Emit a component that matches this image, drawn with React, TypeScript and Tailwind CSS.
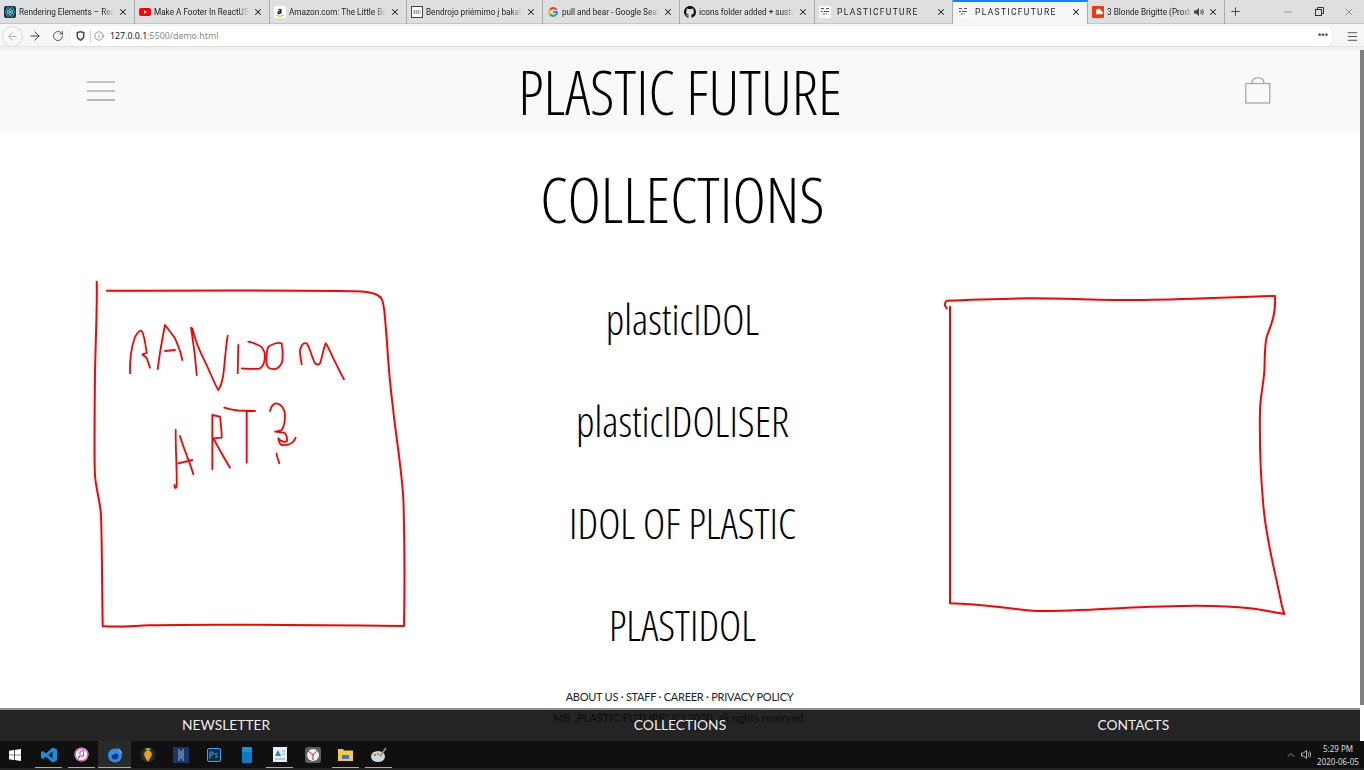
import React from "react";
import { ArrowLeft, ArrowRight, RotateCw, Info, X, Plus, Minus, ChevronUp, Menu } from "lucide-react";

const cond = "font-['Open_Sans',sans-serif] font-light [font-stretch:75%] text-black";

function Fav({ k }: { k: string }) {
  if (k === "react")
    return (
      <svg width="12" height="12" viewBox="0 0 12 12">
        <rect width="12" height="12" rx="2" fill="#20323a" />
        <circle cx="6" cy="6" r="1.2" fill="#61dafb" />
        <ellipse cx="6" cy="6" rx="5" ry="2" fill="none" stroke="#61dafb" strokeWidth=".6" />
        <ellipse cx="6" cy="6" rx="5" ry="2" fill="none" stroke="#61dafb" strokeWidth=".6" transform="rotate(60 6 6)" />
        <ellipse cx="6" cy="6" rx="5" ry="2" fill="none" stroke="#61dafb" strokeWidth=".6" transform="rotate(120 6 6)" />
      </svg>
    );
  if (k === "yt")
    return (
      <svg width="12" height="12" viewBox="0 0 12 12">
        <rect y="2" width="12" height="8" rx="2" fill="#f00" />
        <path d="M5 4.2 8 6 5 7.8z" fill="#fff" />
      </svg>
    );
  if (k === "amz")
    return (
      <svg width="12" height="12" viewBox="0 0 12 12">
        <rect width="12" height="12" rx="2" fill="#fff" />
        <path d="M3.8 6.8c0-2 3.2-1.6 3.2-2.8 0-1-1.7-1-2.6-.2M7 4v3.6M7 5.6C5 5.6 3.8 6 3.8 6.9c0 1 2.2 1 3.2-.2" fill="none" stroke="#222" strokeWidth="1.1" />
        <path d="M2 9c2.500 1.600 5.500 1.600 8 0" fill="none" stroke="#f90" strokeWidth="1" />
      </svg>
    );
  if (k === "bsu")
    return (
      <svg width="12" height="12" viewBox="0 0 12 12">
        <rect x=".5" y=".5" width="11" height="11" fill="#fff" stroke="#444" />
        <path d="M2.500 5h7M2.500 7h7" stroke="#444" strokeWidth="1.200" strokeDasharray="1.500 .6" />
      </svg>
    );
  if (k === "g")
    return (
      <svg width="12" height="12" viewBox="0 0 12 12">
        <path d="M10.500 3.500A5 5 0 0 0 2 3.200l1.800 1.300A3 3 0 0 1 8.300 4z" fill="#ea4335" />
        <path d="M2 3.200a5 5 0 0 0 0 5.600l1.800-1.300a3 3 0 0 1 0-3z" fill="#fbbc05" />
        <path d="M2 8.800a5 5 0 0 0 7.300 1L7.600 8.400A3 3 0 0 1 3.800 7.500z" fill="#34a853" />
        <path d="M9.300 9.800A5 5 0 0 0 11 5H6v2h2.900a2.500 2.500 0 0 1-1.300 1.400z" fill="#4285f4" />
      </svg>
    );
  if (k === "gh")
    return (
      <svg width="12" height="12" viewBox="0 0 16 16" fill="#111">
        <path d="M8 0C3.580 0 0 3.580 0 8c0 3.540 2.290 6.530 5.470 7.590.4.070.55-.17.55-.38 0-.19-.01-.82-.01-1.490-2.010.37-2.530-.49-2.690-.94-.09-.23-.48-.94-.82-1.130-.28-.15-.68-.52-.01-.53.63-.01 1.080.58 1.230.82.720 1.210 1.870.870 2.330.660.070-.520.280-.870.510-1.070-1.780-.200-3.640-.890-3.640-3.950 0-.870.310-1.590.820-2.150-.080-.200-.360-1.020.080-2.120 0 0 .670-.210 2.200.820a7.400 7.400 0 0 1 4 0c1.530-1.040 2.200-.820 2.200-.820.440 1.100.160 1.920.080 2.120.510.560.820 1.270.820 2.150 0 3.070-1.870 3.750-3.650 3.950.290.250.540.730.540 1.480 0 1.070-.010 1.930-.010 2.200 0 .210.150.460.550.380A8.010 8.010 0 0 0 16 8c0-4.420-3.580-8-8-8z" />
      </svg>
    );
  if (k === "pf")
    return (
      <svg width="12" height="12" viewBox="0 0 12 12">
        <rect width="12" height="12" fill="#fafafa" />
        <path d="M2 2.500h3M7 2.500h3M2 5.500h2M5 5.500h5M4 8h2M7 8h1" stroke="#555" strokeWidth="1" />
      </svg>
    );
  return (
    <svg width="12" height="12" viewBox="0 0 12 12">
      <rect width="12" height="12" rx="1" fill="#f5350f" />
      <path d="M2 8.200h7.500a1.500 1.500 0 0 0 0-3 3 3 0 0 0-5.500-1V8.200z" fill="#fff" />
    </svg>
  );
}

const tabs = [
  { k: "react", t: "Rendering Elements – React" },
  { k: "yt", t: "Make A Footer In ReactUS | 2" },
  { k: "amz", t: "Amazon.com: The Little Book" },
  { k: "bsu", t: "Bendrojo priėmimo į bakalaur" },
  { k: "g", t: "pull and bear - Google Search" },
  { k: "gh", t: "icons folder added + sustain" },
  { k: "pf", t: "PLASTICFUTURE", s: true },
  { k: "pf", t: "PLASTICFUTURE", s: true, a: true },
  { k: "sc", t: "3 Blonde Brigitte (Produ", m: true },
];

function TabBar() {
  return (
    <div className="h-[24px] bg-[#dedfe1] flex items-stretch shrink-0 border-b border-[#c4c5c8]">
      <div className="grid grid-cols-[135px_135px_137px_136px_137px_135px_138px_135px_137px]">
        {tabs.map((x, i) => (
          <div
            key={i}
            className={
              "flex items-center pl-[3px] pr-[6px] gap-[2px] border-r border-[#a9aaad] " +
              (x.a ? "bg-[#f5f6f7] border-t-2 border-t-[#0a84ff] h-[24px] pb-[2px]" : "")
            }
          >
            <span className="w-[14px] h-[14px] flex items-center justify-center shrink-0">
              <Fav k={x.k} />
            </span>
            <span
              className={
                "flex-1 min-w-0 overflow-hidden whitespace-nowrap font-['Roboto',sans-serif] text-[#1d1d20] [mask-image:linear-gradient(to_right,black_88%,transparent)] " +
                (x.s ? "text-[8.5px] tracking-[1.33px] pl-[3px]" : "text-[8.2px] leading-[14px]")
              }
            >
              {x.t}
            </span>
            {x.m && (
              <svg width="10" height="10" viewBox="0 0 10 10" className="shrink-0">
                <path d="M0 3.500h2L5 1v8L2 6.500H0z" fill="#444" />
                <path d="M6.500 3c1 1 1 3 0 4M8 2c1.500 1.500 1.500 4.500 0 6" fill="none" stroke="#444" />
              </svg>
            )}
            <X size={10} strokeWidth={2.5} className="shrink-0 text-[#222] ml-[2px]" />
          </div>
        ))}
      </div>
      <div className="flex items-center pl-[4px]">
        <Plus size={13} strokeWidth={1.5} className="text-[#222]" />
      </div>
      <div className="flex-1 flex items-center justify-end text-[#444]">
        <div className="w-[31px] flex justify-center">
          <Minus size={12} strokeWidth={1} />
        </div>
        <div className="w-[31px] flex justify-center">
          <svg width="10" height="10" viewBox="0 0 10 10" fill="none" stroke="#333">
            <rect x="1.500" y="2.500" width="6" height="6" />
            <path d="M3.500 2.500v-2h6v6h-2" />
          </svg>
        </div>
        <div className="w-[30px] flex justify-center">
          <X size={12} strokeWidth={1} />
        </div>
      </div>
    </div>
  );
}

function Toolbar() {
  return (
    <div className="h-[23px] bg-[#f5f6f7] flex items-center shrink-0 border-b border-[#e4e4e5] pt-[2px]">
      <div className="w-[24px] h-[21px] flex items-center justify-center">
        <div className="w-[21px] h-[21px] rounded-full border border-[#d8d8d8] flex items-center justify-center text-[#a3a3a5] bg-[#f8f8f9]">
          <ArrowLeft size={13} strokeWidth={1.5} />
        </div>
      </div>
      <div className="w-[22px] flex justify-center text-[#333]">
        <ArrowRight size={14} strokeWidth={1.6} />
      </div>
      <div className="w-[24px] flex justify-center text-[#333] pr-[1px]">
        <RotateCw size={12} strokeWidth={1.6} />
      </div>
      <div className="w-[1262px] h-[20px] bg-white rounded-sm flex items-center shadow-[0_0_1px_#aaa] pl-[4px]">
        <span className="w-[12px] flex justify-center">
          <svg width="9" height="10" viewBox="0 0 9 10">
            <path d="M.5 1 4.500 0 8.500 1v4c0 2.500-2 4-4 5-2-1-4-2.500-4-5z" fill="#4a4a4f" />
            <path d="M2 2.200 4.500 1.600 7 2.200v2.600c0 1.700-1.200 2.700-2.500 3.400C3.200 7.500 2 6.500 2 4.800z" fill="#fff" />
          </svg>
        </span>
        <span className="w-[1px] h-[14px] bg-[#d5d5d6] ml-[4px]" />
        <span className="w-[15px] mr-[4px] flex justify-center text-[#555]">
          <Info size={10} strokeWidth={1.5} />
        </span>
        <span className="font-['Noto_Sans',sans-serif] text-[8.8px] leading-[20px] text-[#202023] flex-1">
          127.0.0.1<span className="text-[#8a8a8d]">:5500/demo.html</span>
        </span>
        <span className="text-[#4a4a4f] text-[9px] tracking-[0.2px] pr-[4px] font-bold font-['Liberation_Sans',sans-serif]">•••</span>
      </div>
      <div className="flex-1 flex justify-end pr-[5px] text-[#333]">
        <Menu size={13} strokeWidth={1.5} />
      </div>
    </div>
  );
}

function LeftSketch() {
  const frame =
    "M96.700 281.700C97.500 300 95.500 340 95 375C94.500 420 94 460 95 475C96 490 100 500 101 515C102 540 102 590 102.700 626C115 627.500 130 626 150 625.300C200 624 300 624.800 404 626C404.500 600 404.500 540 403.500 502C402 470 395 430 393 408C390 385 389 370 388 358C387 340 386 330 385 318C384 305 382 298 380 297C376 293 370 292 362 291.500C330 290 200 290.500 107 290.700";
  const letters = [
    "M130 373.300C129.500 355 132 345 135 337C138 331 141 330 141.700 331C144 334 145 340 146.700 353L142.300 354.300L146.700 358L150 367.700",
    "M157.700 369C160 350 163 335 165 325C169 330 172 334 175 338.300C178 345 181 352 182.300 360M165 351L175 350",
    "M196.700 375C195 350 192 335 191 327.700M192.300 328.300C195 340 200 352 205 361.700C210 372 215 385 218.300 390C220 388 222 382 223.300 375C225 360 226 345 227.700 335.700",
    "M237.700 373.300L238.300 345M241.700 368.300C250 369 256 369.500 260 368.300C264 366 265 360 265 355C264 349 261 346 258.300 345C254 343 251 342 248.300 341.700",
    "M266.700 365C266 358 267 350 268.300 346.700C272 344 278 342 281.700 343.300C283 350 283 356 282.300 361.700C280 367 278 369 275 369C271 369.500 268 368 266.700 365",
    "M301.700 364.300C300.500 358 299.800 353 300 350C301 346 303 342 306.700 343.300C310 348 312 358 315 363.300C317 365 318.500 365 320 363.300C322 358 323.500 348 325.700 343.300C329 348 332 356 335 361.700C338 368 341 374 344 379.300",
    "M175.700 430C175.500 450 177 470 176.700 485C176.500 489 174.500 489 174.500 485M180 436C184 450 190 462 193.300 474.300M178.300 463.300L192.300 460",
    "M212.300 469.300L212.300 415L220 416.700C221 425 221.800 432 221.700 437.700L213.300 438.300C218 447 224 458 230 467.700",
    "M224.300 407.700C228 409 232 410 238 410.500L255 411M246.700 411.700L246.700 462.700",
    "M270 411C271 406 274 403 276.700 403.300C281 404 285 409 285 415C285 422 284 427 281.700 430C279 431 277 431.500 275 431.700C280 432 283.500 432 285 433.300C287 436 287.500 439 286.700 441.700C284 442 280 441 278.300 438.300C279 442 280 444.500 281.700 445C286 445.500 291 444 293.300 441.700L295.700 437.700",
    "M276.700 453.300C276 456 278 458 279.300 463.300",
  ];
  return (
    <svg width="320" height="354" viewBox="90 278 320 354" fill="none" stroke="#ff0000" strokeLinecap="round" strokeLinejoin="round">
      <path d={frame} strokeWidth="2" />
      {letters.map((d, i) => (
        <path key={i} d={d} strokeWidth="1.800" />
      ))}
    </svg>
  );
}

function RightSketch() {
  return (
    <svg width="350" height="330" viewBox="940 290 350 330" fill="none" stroke="#ff0000" strokeWidth="2" strokeLinecap="round" strokeLinejoin="round">
      <path d="M946.700 308.300C945 306 944.500 304 945 303.300C945.500 301.500 946 300.800 947.300 300.700C980 299.800 1005 298.500 1030 298.300C1065 298.300 1100 300 1136.700 300C1180 300 1230 297 1275 296C1275.500 303 1275 307 1274.300 311.700C1273 322 1269 330 1266.700 336.700C1264.500 345 1265 358 1264.300 371.700C1263 388 1260 398 1260 411.700C1259.500 440 1261 480 1263.300 505C1266 540 1276 575 1281.700 605L1284.300 614C1272 612 1262 609.500 1250 608.300C1230 606 1215 605.800 1196.700 605.700C1140 605.700 1090 611 1036.700 611C1000 608 985 604 950 603.300L950 306.700" />
    </svg>
  );
}

function Page() {
  return (
    <div className="flex-1 relative overflow-hidden bg-white min-w-0">
      <header className="h-[83px] bg-[#f9f9f9] grid grid-cols-[1fr_auto_1fr] items-center">
        <div className="pl-[87px] pb-[2px] flex flex-col gap-[7px] w-[115px] box-content">
          <span className="h-[2px] w-[28px] bg-[#c2c2c2]" />
          <span className="h-[2px] w-[28px] bg-[#c2c2c2]" />
          <span className="h-[2px] w-[28px] bg-[#b8b8b8]" />
        </div>
        <h1 className={cond + " text-[61.5px] leading-[83px] whitespace-nowrap"}>PLASTIC FUTURE</h1>
        <div className="flex justify-end pr-[89px] pb-[2px]">
          <svg width="26" height="28" viewBox="0 0 26 28" fill="none" stroke="#a8a8a8" strokeWidth="1.300">
            <rect x=".8" y="6.500" width="24" height="19.500" />
            <path d="M7 6.500C7 2 9.500 .8 13 .8S19 2 19 6.500" />
          </svg>
        </div>
      </header>
      <h2 className={cond + " text-[63.5px] leading-[87px] text-center mt-[22px] pl-[5px] whitespace-nowrap"}>COLLECTIONS</h2>
      <section className="grid grid-cols-[500px_365px_1fr] mt-[10px]">
        <div className="pl-[90px] pt-[26px]">
          <LeftSketch />
        </div>
        <div className="flex flex-col items-center pt-[39px] gap-[46px]">
          {["plasticIDOL", "plasticIDOLISER", "IDOL OF PLASTIC", "PLASTIDOL"].map((t) => (
            <div key={t} className={cond + " text-[42.2px] leading-[56px] whitespace-nowrap"}>
              {t}
            </div>
          ))}
        </div>
        <div className="pt-[38px] pl-[75px]">
          <RightSketch />
        </div>
      </section>
      <div className="absolute left-0 right-0 top-[640px] text-center font-['Lato',sans-serif] text-[11px] pr-[1px]">
        <p className="leading-[14px] text-[#222] tracking-[-0.25px]">ABOUT US · STAFF · CAREER · PRIVACY POLICY</p>
        <p className="leading-[14px] mt-[7px] text-[#555]">MB „PLASTIC FUTURE" (C) 2020, all rights reserved.</p>
      </div>
      <nav className="absolute left-0 right-0 bottom-0 h-[33px] bg-black/[0.86] border-t-2 border-[#8f8f8f] grid grid-cols-3 items-center text-center font-['Lato',sans-serif] font-normal text-[13.8px] text-[#eeeeee]">
        <span className="pr-[1px]">NEWSLETTER</span>
        <span>COLLECTIONS</span>
        <span>CONTACTS</span>
      </nav>
    </div>
  );
}

function TB({ children, line, active }: { children: React.ReactNode; line?: boolean; active?: boolean }) {
  return (
    <div className={"w-[33px] h-full flex items-center justify-center relative " + (active ? "bg-[#2a2a2a]" : "")}>
      {children}
      {line && <span className={"absolute bottom-[0px] h-[1.5px] bg-[#76b9ed] " + (active ? "left-0 right-0" : "left-[3px] right-[3px]")} />}
    </div>
  );
}

function Taskbar() {
  return (
    <div className="h-[29px] shrink-0 bg-[#101010] flex flex-col">
      <div className="h-[27px] flex items-center">
        <div className="w-[32px] flex justify-center pr-[2px]">
          <svg width="12" height="12" viewBox="0 0 12 12" fill="#fff">
            <path d="M0 1.700 5 1v4.700H0zM5.700.9 12 0v5.700H5.700zM0 6.300h5V11l-5-.7zM5.700 6.300H12V12l-6.300-.9z" />
          </svg>
        </div>
        <TB line>
          <svg width="16" height="16" viewBox="0 0 16 16">
            <path d="M11.500.5 16 2.500v11L11.500 15.500 5 9.500l-3 2.500-2-1V5l2-1 3 2.500zM11.500 4.500 7.500 8l4 3.500z" fill="#1c8fdc" />
          </svg>
        </TB>
        <TB line>
          <svg width="15" height="15" viewBox="0 0 15 15">
            <circle cx="7.500" cy="7.500" r="7" fill="#f4f4f6" />
            <circle cx="7.500" cy="7.500" r="6.200" fill="none" stroke="#e850a0" strokeWidth="1.200" />
            <path d="M6 10V4.500l3.500-1V9" stroke="#b050d0" fill="none" />
            <circle cx="5" cy="10" r="1.100" fill="#b050d0" />
            <circle cx="8.500" cy="9" r="1.100" fill="#b050d0" />
          </svg>
        </TB>
        <TB line active>
          <svg width="16" height="16" viewBox="0 0 16 16">
            <circle cx="8" cy="8.500" r="7" fill="#2f8ee0" />
            <path d="M4.500 9a3.500 3.500 0 0 0 7 0c0-1.500-1-2.500-2-3-.5 1-3 1-5 3z" fill="#20308f" />
            <path d="M10 .5c3 1.500 5.500 4 5.500 8 0-2-2-3.200-3.200-3.200C12.300 3.500 11.500 1.800 10 .5z" fill="#5cb3f5" />
          </svg>
        </TB>
        <TB>
          <svg width="16" height="16" viewBox="0 0 16 16">
            <circle cx="8" cy="8" r="7.500" fill="#2a2a2a" />
            <path d="M8 3.500c3 0 4.500 2.500 3.500 5.500l-3 5H7L4.500 9C3.500 6 5 3.500 8 3.500z" fill="#e8a020" />
            <path d="M5 1.800c1.500-1 4.500-1 6 0L8 4.500z" fill="#7ab648" />
          </svg>
        </TB>
        <TB>
          <svg width="16" height="16" viewBox="0 0 16 16">
            <rect width="16" height="16" fill="#1d3564" />
            <path d="M6 2v12M8 4v8M10 2v12" stroke="#9db6d8" />
          </svg>
        </TB>
        <TB>
          <svg width="14" height="14" viewBox="0 0 14 14">
            <rect x=".5" y=".5" width="13" height="13" rx="1.500" fill="#0c2a3d" stroke="#31a8ff" />
            <path d="M3 10.500V4h2c2 0 2 3 0 3H3M10.500 5.500C9.500 5 8 5.200 8.200 6.300c.2 1 2.500.8 2.400 2.200-.1 1-1.800 1-2.700.5" fill="none" stroke="#31a8ff" />
          </svg>
        </TB>
        <TB>
          <svg width="10" height="16" viewBox="0 0 10 16">
            <rect width="10" height="16" rx="1" fill="#1e90dc" />
            <rect y="5" width="10" height="11" rx="1" fill="#0f79c4" />
          </svg>
        </TB>
        <TB line>
          <svg width="14" height="16" viewBox="0 0 14 16">
            <rect width="14" height="15" fill="#e8eef5" />
            <path d="M2 9 5 3l3 6z" fill="#2f7fd0" />
            <path d="M9 4h3M9 7h3M2 12h10" stroke="#8aa" />
          </svg>
        </TB>
        <TB>
          <svg width="16" height="16" viewBox="0 0 16 16">
            <rect width="16" height="16" rx="3" fill="#5c6066" />
            <circle cx="8" cy="8" r="6" fill="#f0f0f0" />
            <path d="M3 4 8 8l4-4M8 8v5" stroke="#d02020" strokeWidth="1" fill="none" />
          </svg>
        </TB>
        <TB line>
          <svg width="15" height="13" viewBox="0 0 15 13">
            <path d="M0 1h5l1 1.500h9V13H0z" fill="#f6c944" />
            <rect x="4" y="7" width="7" height="4" fill="#2b7fd0" />
          </svg>
        </TB>
        <TB line>
          <svg width="16" height="16" viewBox="0 0 16 16">
            <ellipse cx="7" cy="9.500" rx="7" ry="5.500" fill="#cfd8de" />
            <circle cx="4" cy="8" r="1.100" fill="#d04040" />
            <circle cx="7" cy="7" r="1.100" fill="#40a040" />
            <circle cx="10" cy="8.500" r="1.100" fill="#3070d0" />
            <path d="M9 9 15 1" stroke="#c88a40" strokeWidth="1.500" />
          </svg>
        </TB>
        <div className="flex-1 flex items-center justify-end text-[#dcdcdc] h-full">
          <ChevronUp size={12} strokeWidth={1.2} />
          <svg width="11" height="11" viewBox="0 0 11 11" className="ml-[4px]" fill="none" stroke="#ddd" strokeWidth=".8">
            <path d="M.5 4v3h2l3 2.500v-8L2.500 4zM7 3.500c1 1 1 3 0 4M8.500 2.500c1.500 1.500 1.500 4.500 0 6" />
          </svg>
          <div className="w-[52px] text-center font-['Noto_Sans',sans-serif] text-[8px] leading-[13px]">
            <div>5:29 PM</div>
            <div>2020-06-05</div>
          </div>
        </div>
      </div>
      <div className="flex-1 bg-[#222]" />
    </div>
  );
}

export default function App() {
  return (
    <div className="w-[1364px] h-[770px] flex flex-col overflow-hidden bg-white">
      <TabBar />
      <Toolbar />
      <div className="h-[3px] shrink-0 bg-[#f0f0f1]" />
      <div className="flex flex-1 min-h-0">
        <Page />
        <div className="w-[4px] bg-white shrink-0">
          <div className="h-[655px] bg-[#808080]" />
        </div>
      </div>
      <Taskbar />
    </div>
  );
}
